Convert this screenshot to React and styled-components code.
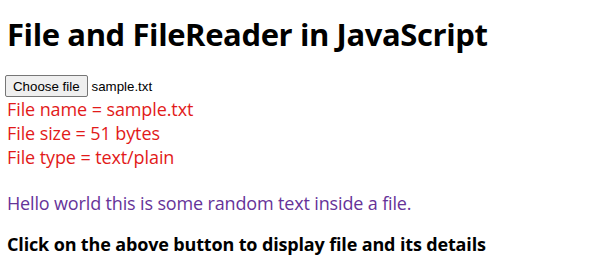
import styled, { createGlobalStyle } from "styled-components";

const GlobalStyle = createGlobalStyle`
    body {
        margin: 0;
        background: #fff;
        font-family: "Open Sans", "Noto Sans", sans-serif;
    }
`;

const Page = styled.div`
    padding: 0 7px;
    box-sizing: border-box;
    width: 600px;
    height: 269px;
`;
const Title = styled.h1`
    margin: 0;
    padding: 14px 0 0 0;
    font-size: 31px;
    line-height: 40px;
    font-weight: 700;
    color: #000;
    letter-spacing: -0.4px;
`;
const FileRow = styled.div`
    display: flex;
    align-items: center;
    margin: 21px 0 0 -2px;
    height: 22px;
`;
const FileButton = styled.button`
    height: 22px;
    box-sizing: border-box;
    padding: 0 7px;
    background: #efefef;
    border: 1px solid #767676;
    border-radius: 2px;
    font-family: "Liberation Sans", Arial, sans-serif;
    font-size: 13.3px;
    color: #000;
`;
const FileName = styled.span`
    margin-left: 4px;
    font-family: "Liberation Sans", Arial, sans-serif;
    font-size: 13.3px;
    color: #000;
`;
const Details = styled.div`
    margin-top: 0;
`;
const DetailLine = styled.div`
    font-size: 18px;
    line-height: 24px;
    color: #e21a1a;
    letter-spacing: -0.1px;
`;
const Content = styled.p`
    margin: 22px 0 0 0;
    font-size: 18px;
    line-height: 24px;
    color: #663399;
    letter-spacing: -0.15px;
`;
const Hint = styled.h3`
    margin: 17px 0 0 0;
    font-size: 18px;
    line-height: 24px;
    font-weight: 700;
    color: #000;
    letter-spacing: -0.15px;
`;

export default () => {
    return (
        <Page>
            <GlobalStyle />
            <Title>File and FileReader in JavaScript</Title>
            <FileRow>
                <FileButton>Choose file</FileButton>
                <FileName>sample.txt</FileName>
            </FileRow>
            <Details>
                <DetailLine>File name = sample.txt</DetailLine>
                <DetailLine>File size = 51 bytes</DetailLine>
                <DetailLine>File type = text/plain</DetailLine>
            </Details>
            <Content>Hello world this is some random text inside a file.</Content>
            <Hint>Click on the above button to display file and its details</Hint>
        </Page>
    );
};
